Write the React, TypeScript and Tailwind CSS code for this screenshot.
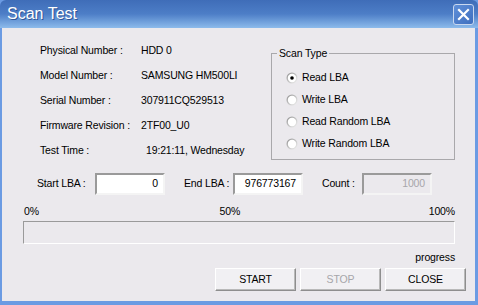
import React from 'react';

const font = { fontFamily: '"Liberation Sans", Arial, sans-serif' };

function Radio({ checked }: { checked?: boolean }) {
  return (
    <svg width="12" height="12" viewBox="0 0 12 12" className="shrink-0">
      <defs>
        <linearGradient id="rg" x1="0" y1="0" x2="1" y2="1">
          <stop offset="0" stopColor="#8f8f8f" />
          <stop offset="0.55" stopColor="#c8c8c8" />
          <stop offset="1" stopColor="#f4f4f4" />
        </linearGradient>
      </defs>
      <circle cx="6" cy="6" r="5.5" fill="url(#rg)" />
      <circle cx="6" cy="6" r="4.2" fill="#ffffff" />
      {checked && <circle cx="6" cy="6" r="1.8" fill="#000000" />}
    </svg>
  );
}

function Field({ label, value, extra }: { label: string; value: string; extra?: string }) {
  return (
    <div className="flex h-[25px] items-center">
      <span className="w-[101px]">{label}</span>
      <span className={extra}>{value}</span>
    </div>
  );
}

function Button({ children, disabled }: { children: React.ReactNode; disabled?: boolean }) {
  return (
    <button
      className={`w-[81px] h-[23px] bg-[#f1f0f3] border border-t-white border-l-white border-r-[#8e8e8e] border-b-[#8e8e8e] shadow-[inset_-1px_-1px_0_#b9b9b9] text-[10.5px] ${
        disabled ? 'text-[#a7a6aa]' : 'text-black'
      }`}
    >
      {children}
    </button>
  );
}

function Input({ value, disabled }: { value: string; disabled?: boolean }) {
  return (
    <div
      className={`w-[70px] h-[22px] flex items-center justify-end pr-[5px] border-2 border-t-[#9a9a9a] border-l-[#9a9a9a] border-r-[#f4f4f4] border-b-[#f4f4f4] ${
        disabled ? 'bg-[#ebe9ed] text-[#a7a6aa]' : 'bg-white text-black'
      }`}
    >
      {value}
    </div>
  );
}

export default function App() {
  return (
    <div
      className="w-[478px] h-[305px] flex flex-col bg-[#6b9be3] text-[10.5px] tracking-[-0.15px] text-black"
      style={font}
    >
      {/* title bar */}
      <div className="h-[28px] flex items-center pl-[7px] pr-[4px] bg-gradient-to-b from-[#3f6db8] via-[#4d7ec7] to-[#8dbbeb] rounded-t-[6px]">
        <span className="text-white text-[16px] tracking-normal [text-shadow:1px_1px_0_#2f5597]">Scan Test</span>
        <div className="ml-auto w-[21px] h-[21px] rounded-[3px] border border-[#c9d8ef] bg-gradient-to-br from-[#5f8fd8] to-[#3f6fbf] flex items-center justify-center">
          <svg width="13" height="13" viewBox="0 0 13 13">
            <path d="M2 2 L11 11 M11 2 L2 11" stroke="white" strokeWidth="2.2" strokeLinecap="square" />
          </svg>
        </div>
      </div>

      {/* body */}
      <div className="flex-1 ml-[2px] mr-[3px] mb-[4px] bg-[#ebe9ed] flex flex-col">
        <div className="h-[145px] flex items-start">
          <div className="ml-[38px] mt-[10px] flex flex-col">
            <Field label="Physical Number :" value="HDD 0" />
            <Field label="Model Number :" value="SAMSUNG HM500LI" />
            <Field label="Serial Number :" value="307911CQ529513" />
            <Field label="Firmware Revision :" value="2TF00_U0" />
            <Field label="Test Time :" value="19:21:11, Wednesday" extra="pl-[5px]" />
          </div>

          <div className="relative ml-auto mr-[20px] mt-[25px] w-[184px] h-[107px] border border-[#a9a8ab] pt-[13px] pl-[14px]">
            <span className="absolute -top-[8px] left-[5px] px-[2px] bg-[#ebe9ed]">Scan Type</span>
            {['Read LBA', 'Write LBA', 'Read Random LBA', 'Write Random LBA'].map((t, i) => (
              <div key={t} className="h-[22px] flex items-center gap-[4px]">
                <Radio checked={i === 0} />
                <span>{t}</span>
              </div>
            ))}
          </div>
        </div>

        <div className="flex items-center h-[22px] ml-[35px]">
          <span className="w-[58px]">Start LBA :</span>
          <Input value="0" />
          <span className="ml-[19px] w-[49px]">End LBA :</span>
          <Input value="976773167" />
          <span className="ml-[19px] w-[40px]">Count :</span>
          <Input value="1000" disabled />
        </div>

        <div className="mt-[10px] h-[14px] flex items-center justify-between ml-[22px] mr-[20px]">
          <span>0%</span>
          <span className="mr-[8px]">50%</span>
          <span>100%</span>
        </div>

        <div className="mt-[2px] ml-[21px] w-[432px] h-[23px] border border-t-[#9a9a9a] border-l-[#9a9a9a] border-r-white border-b-white" />

        <div className="mt-[7px] h-[14px] flex items-center justify-end mr-[20px]">progress</div>

        <div className="mt-[3px] flex justify-end gap-[4px] mr-[9px]">
          <Button>START</Button>
          <Button disabled>STOP</Button>
          <Button>CLOSE</Button>
        </div>
      </div>
    </div>
  );
}
